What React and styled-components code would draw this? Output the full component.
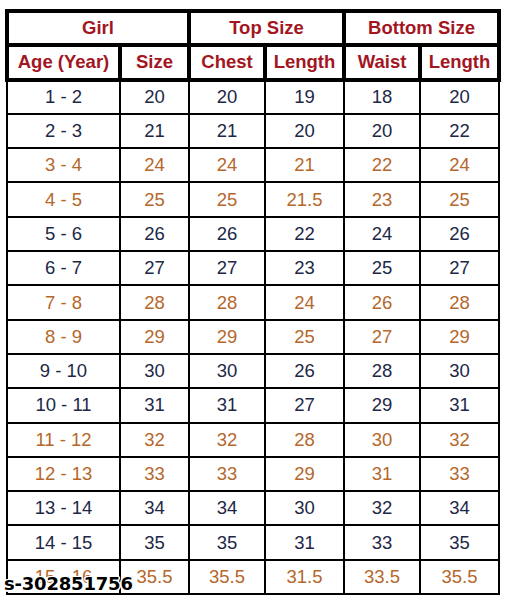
import React from 'react';
import styled, { createGlobalStyle } from 'styled-components';

const GlobalStyle = createGlobalStyle`
  html, body {
    margin: 0;
    padding: 0;
    background: #ffffff;
  }
  body {
    font-family: "Liberation Sans", Arial, sans-serif;
  }
`;

const Page = styled.div`
  position: relative;
  width: 512px;
  height: 604px;
  padding: 9px 0 0 5px;
  box-sizing: border-box;
`;

const Table = styled.table`
  border-collapse: collapse;
  table-layout: fixed;
  width: 492px;
`;

const HeadRow = styled.tr`
  height: 34.3px;
`;

const HeadCell = styled.th`
  border: 4px solid #000;
  padding: 0;
  text-align: center;
  vertical-align: middle;
  font-size: 18.5px;
  font-weight: 700;
  color: #a3161f;
  white-space: nowrap;
`;

const Row = styled.tr`
  height: 34.3px;
`;

const Cell = styled.td`
  border: 2px solid #000;
  padding: 0;
  text-align: center;
  vertical-align: middle;
  font-size: 18.5px;
  color: ${(p) => (p.$warm ? '#b5672c' : '#1d2846')};
`;

const Watermark = styled.div`
  position: absolute;
  left: 4px;
  top: 573px;
  font-family: "DejaVu Sans", "Liberation Sans", sans-serif;
  font-size: 18px;
  font-weight: 700;
  letter-spacing: -0.2px;
  color: #000;
  text-shadow:
    -1.5px 0 #fff, 1.5px 0 #fff, 0 -1.5px #fff, 0 1.5px #fff,
    -1px -1px #fff, 1px 1px #fff, -1px 1px #fff, 1px -1px #fff;
`;

const widths = [113, 69, 76, 79, 76, 79];

const rows = [
  ['1 - 2', '20', '20', '19', '18', '20'],
  ['2 - 3', '21', '21', '20', '20', '22'],
  ['3 - 4', '24', '24', '21', '22', '24'],
  ['4 - 5', '25', '25', '21.5', '23', '25'],
  ['5 - 6', '26', '26', '22', '24', '26'],
  ['6 - 7', '27', '27', '23', '25', '27'],
  ['7 - 8', '28', '28', '24', '26', '28'],
  ['8 - 9', '29', '29', '25', '27', '29'],
  ['9 - 10', '30', '30', '26', '28', '30'],
  ['10 - 11', '31', '31', '27', '29', '31'],
  ['11 - 12', '32', '32', '28', '30', '32'],
  ['12 - 13', '33', '33', '29', '31', '33'],
  ['13 - 14', '34', '34', '30', '32', '34'],
  ['14 - 15', '35', '35', '31', '33', '35'],
  ['15 - 16', '35.5', '35.5', '31.5', '33.5', '35.5'],
];

// rows alternate in pairs: two navy, two brown
const isWarm = (i) => Math.floor(i / 2) % 2 === 1;

export default function App() {
  return (
    <>
      <GlobalStyle />
      <Page>
        <Table>
          <colgroup>
            {widths.map((w, i) => (
              <col key={i} style={{ width: w }} />
            ))}
          </colgroup>
          <thead>
            <HeadRow>
              <HeadCell colSpan={2}>Girl</HeadCell>
              <HeadCell colSpan={2}>Top Size</HeadCell>
              <HeadCell colSpan={2}>Bottom Size</HeadCell>
            </HeadRow>
            <HeadRow>
              <HeadCell>Age (Year)</HeadCell>
              <HeadCell>Size</HeadCell>
              <HeadCell>Chest</HeadCell>
              <HeadCell>Length</HeadCell>
              <HeadCell>Waist</HeadCell>
              <HeadCell>Length</HeadCell>
            </HeadRow>
          </thead>
          <tbody>
            {rows.map((r, i) => (
              <Row key={i}>
                {r.map((v, j) => (
                  <Cell key={j} $warm={isWarm(i)}>
                    {v}
                  </Cell>
                ))}
              </Row>
            ))}
          </tbody>
        </Table>
        <Watermark>s-302851756</Watermark>
      </Page>
    </>
  );
}
